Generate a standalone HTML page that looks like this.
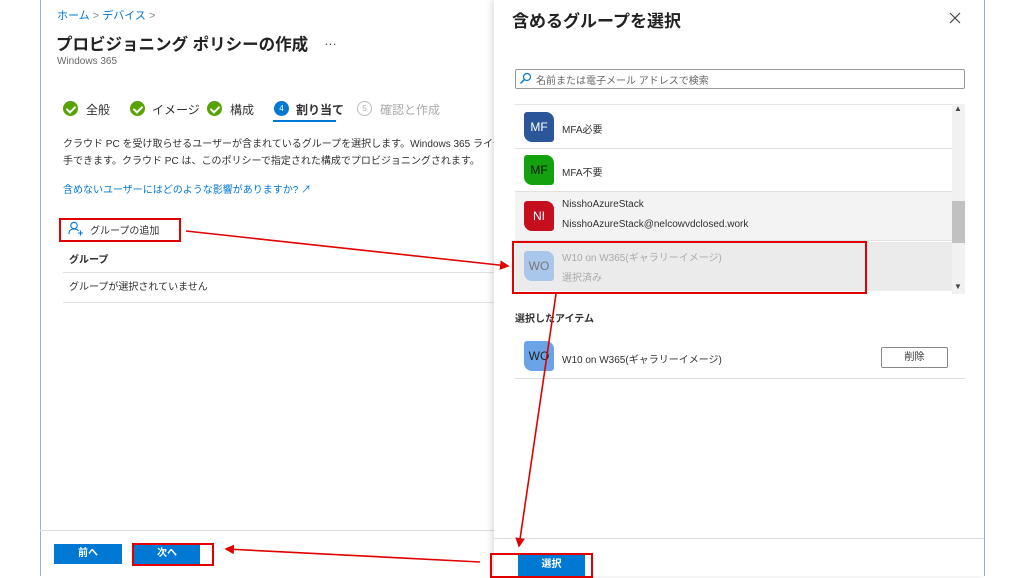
<!DOCTYPE html>
<html><head><meta charset="utf-8"><style>
*{margin:0;padding:0;box-sizing:border-box}
body{width:1024px;height:576px;position:relative;overflow:hidden;background:#fff;font-family:"Liberation Sans","Noto Sans CJK JP",sans-serif;color:#323130}
.a{position:absolute;white-space:nowrap}
.chk{position:absolute;width:15px;height:15px;border-radius:50%;background:#57a300;top:101px}
.chk:after{content:"";position:absolute;left:5px;top:3px;width:4px;height:7px;border:solid #fff;border-width:0 2px 2px 0;transform:rotate(45deg)}
.av{position:absolute;width:30px;height:30px;border-radius:3px 8px 3px 8px;color:#fff;font-size:12px;text-align:center;line-height:30px}
.btn{position:absolute;background:#0078d4;color:#fff;font-size:10px;font-weight:bold;text-align:center;line-height:20px}
.red{position:absolute;border:2px solid #e00000}
</style></head><body>
<div class="a" style="left:40px;top:0;width:1px;height:576px;background:#8fb2e0"></div>
<div class="a" style="left:984px;top:0;width:1px;height:576px;background:#8fb2e0"></div>
<div class="a" style="left:57px;top:7px;font-size:11px;color:#0078d4">ホーム <span style="color:#888">&gt;</span> デバイス <span style="color:#888">&gt;</span></div>
<div class="a" style="left:56px;top:31px;font-size:16.5px;font-weight:bold;color:#222">プロビジョニング ポリシーの作成</div>
<div class="a" style="left:324px;top:33px;font-size:13px;color:#555">…</div>
<div class="a" style="left:57px;top:56px;font-size:10px;color:#666">Windows 365</div>
<div class="chk" style="left:63px"></div><div class="a" style="left:86px;top:101px;font-size:12px">全般</div>
<div class="chk" style="left:130px"></div><div class="a" style="left:152px;top:101px;font-size:12px">イメージ</div>
<div class="chk" style="left:207px"></div><div class="a" style="left:230px;top:101px;font-size:12px">構成</div>
<div class="a" style="left:274px;top:101px;width:15px;height:15px;border-radius:50%;background:#0078d4;color:#fff;font-size:8px;text-align:center;line-height:15px">4</div>
<div class="a" style="left:296px;top:101px;font-size:12px;font-weight:bold">割り当て</div>
<div class="a" style="left:273px;top:120px;width:63px;height:2px;background:#0078d4"></div>
<div class="a" style="left:357px;top:101px;width:15px;height:15px;border-radius:50%;border:1px solid #bbb;color:#aaa;font-size:8px;text-align:center;line-height:13px">5</div>
<div class="a" style="left:380px;top:101px;font-size:12px;color:#aaa">確認と作成</div>
<div class="a" style="left:63px;top:135px;font-size:10px">クラウド PC を受け取らせるユーザーが含まれているグループを選択します。Windows 365 ライセンスを持</div>
<div class="a" style="left:63px;top:152px;font-size:10px">手できます。クラウド PC は、このポリシーで指定された構成でプロビジョニングされます。</div>
<div class="a" style="left:63px;top:181px;font-size:10px;color:#0078d4">含めないユーザーにはどのような影響がありますか? ↗</div>
<svg class="a" style="left:68px;top:221px" width="16" height="15"><g stroke="#0078d4" stroke-width="1.1" fill="none"><circle cx="6" cy="4.5" r="3.2"/><path d="M1 13 C1 9 3.5 8 6 8 C8.5 8 10 9 10.5 10"/><path d="M12.5 9.5v5M10 12h5"/></g></svg>
<div class="a" style="left:90px;top:222px;font-size:10px">グループの追加</div>
<div class="red" style="left:59px;top:218px;width:122px;height:24px"></div>
<div class="a" style="left:69px;top:251px;font-size:10px;font-weight:bold">グループ</div>
<div class="a" style="left:63px;top:272px;width:431px;height:1px;background:#e1e1e1"></div>
<div class="a" style="left:69px;top:278px;font-size:10px">グループが選択されていません</div>
<div class="a" style="left:63px;top:302px;width:431px;height:1px;background:#e1e1e1"></div>
<div class="a" style="left:40px;top:530px;width:454px;height:1px;background:#ddd"></div>
<div class="btn" style="left:54px;top:544px;width:68px">前へ</div>
<div class="btn" style="left:134px;top:544px;width:66px">次へ</div>
<div class="red" style="left:132px;top:543px;width:82px;height:23px"></div>
<div class="a" style="left:494px;top:0;width:490px;height:576px;background:#fff;box-shadow:-3px 0 6px rgba(0,0,0,.12)"></div>
<div class="a" style="left:512px;top:7px;font-size:17px;font-weight:bold;color:#222">含めるグループを選択</div>
<svg class="a" style="left:949px;top:12px" width="12" height="12"><path d="M1 1L11 11M11 1L1 11" stroke="#444" stroke-width="1.2"/></svg>
<div class="a" style="left:515px;top:69px;width:450px;height:20px;border:1px solid #999;border-radius:2px"></div>
<svg class="a" style="left:519px;top:72px" width="13" height="13"><circle cx="8" cy="5" r="3.5" stroke="#0078d4" stroke-width="1.2" fill="none"/><path d="M5.5 7.5L1.5 11.5" stroke="#0078d4" stroke-width="1.3"/></svg>
<div class="a" style="left:536px;top:72px;font-size:10px;color:#666">名前または電子メール アドレスで検索</div>
<div class="a" style="left:515px;top:104px;width:450px;height:190px;background:#fff;border-top:1px solid #e6e6e6"></div>
<div class="a" style="left:952px;top:104px;width:13px;height:190px;background:#f1f1f1"></div>
<div class="a" style="left:952px;top:201px;width:13px;height:42px;background:#c1c1c1"></div>
<div class="a" style="left:954px;top:104px;font-size:8px;color:#444">▲</div>
<div class="a" style="left:954px;top:282px;font-size:8px;color:#444">▼</div>
<div class="a" style="left:515px;top:148px;width:437px;height:1px;background:#e1e1e1"></div>
<div class="a" style="left:515px;top:191px;width:437px;height:1px;background:#e1e1e1"></div>
<div class="a" style="left:515px;top:192px;width:437px;height:49px;background:#f3f3f3;border-bottom:1px solid #e1e1e1"></div>
<div class="a" style="left:515px;top:242px;width:437px;height:49px;background:#ebebeb"></div>
<div class="av" style="left:524px;top:112px;background:#2b579a">MF</div><div class="a" style="left:562px;top:121px;font-size:10px">MFA必要</div>
<div class="av" style="left:524px;top:155px;background:#13a10e;color:#111">MF</div><div class="a" style="left:562px;top:164px;font-size:10px">MFA不要</div>
<div class="av" style="left:524px;top:201px;background:#c50f1f">NI</div>
<div class="a" style="left:562px;top:199px;font-size:10px">NisshoAzureStack</div>
<div class="a" style="left:562px;top:219px;font-size:10px">NisshoAzureStack@nelcowvdclosed.work</div>
<div class="av" style="left:524px;top:251px;background:#a9c7ea;color:#777">WO</div>
<div class="a" style="left:562px;top:249px;font-size:10px;color:#aaa">W10 on W365(ギャラリーイメージ)</div>
<div class="a" style="left:562px;top:269px;font-size:10px;color:#aaa">選択済み</div>
<div class="red" style="left:512px;top:241px;width:355px;height:53px"></div>
<div class="a" style="left:515px;top:310px;font-size:10px;font-weight:bold">選択したアイテム</div>
<div class="av" style="left:524px;top:341px;background:#6aa3e6;color:#222">WO</div>
<div class="a" style="left:562px;top:351px;font-size:10px">W10 on W365(ギャラリーイメージ)</div>
<div class="a" style="left:881px;top:347px;width:67px;height:21px;border:1px solid #888;border-radius:2px;font-size:10px;text-align:center;line-height:19px">削除</div>
<div class="a" style="left:515px;top:378px;width:450px;height:1px;background:#ddd"></div>
<div class="a" style="left:494px;top:538px;width:490px;height:1px;background:#ddd"></div>
<div class="btn" style="left:518px;top:555px;width:67px;height:21px">選択</div>
<div class="red" style="left:490px;top:553px;width:103px;height:25px"></div>
<svg class="a" style="left:0;top:0" width="1024" height="576">
<defs><marker id="m" markerWidth="6" markerHeight="6" refX="5" refY="3" orient="auto"><path d="M0,0 L6,3 L0,6z" fill="#e00000"/></marker></defs>
<g stroke="#e00000" stroke-width="1.6" fill="none">
<line x1="186" y1="231" x2="508" y2="266" marker-end="url(#m)"/>
<line x1="556" y1="294" x2="519" y2="546" marker-end="url(#m)"/>
<line x1="480" y1="562" x2="226" y2="549" marker-end="url(#m)"/>
</g></svg>
</body></html>
